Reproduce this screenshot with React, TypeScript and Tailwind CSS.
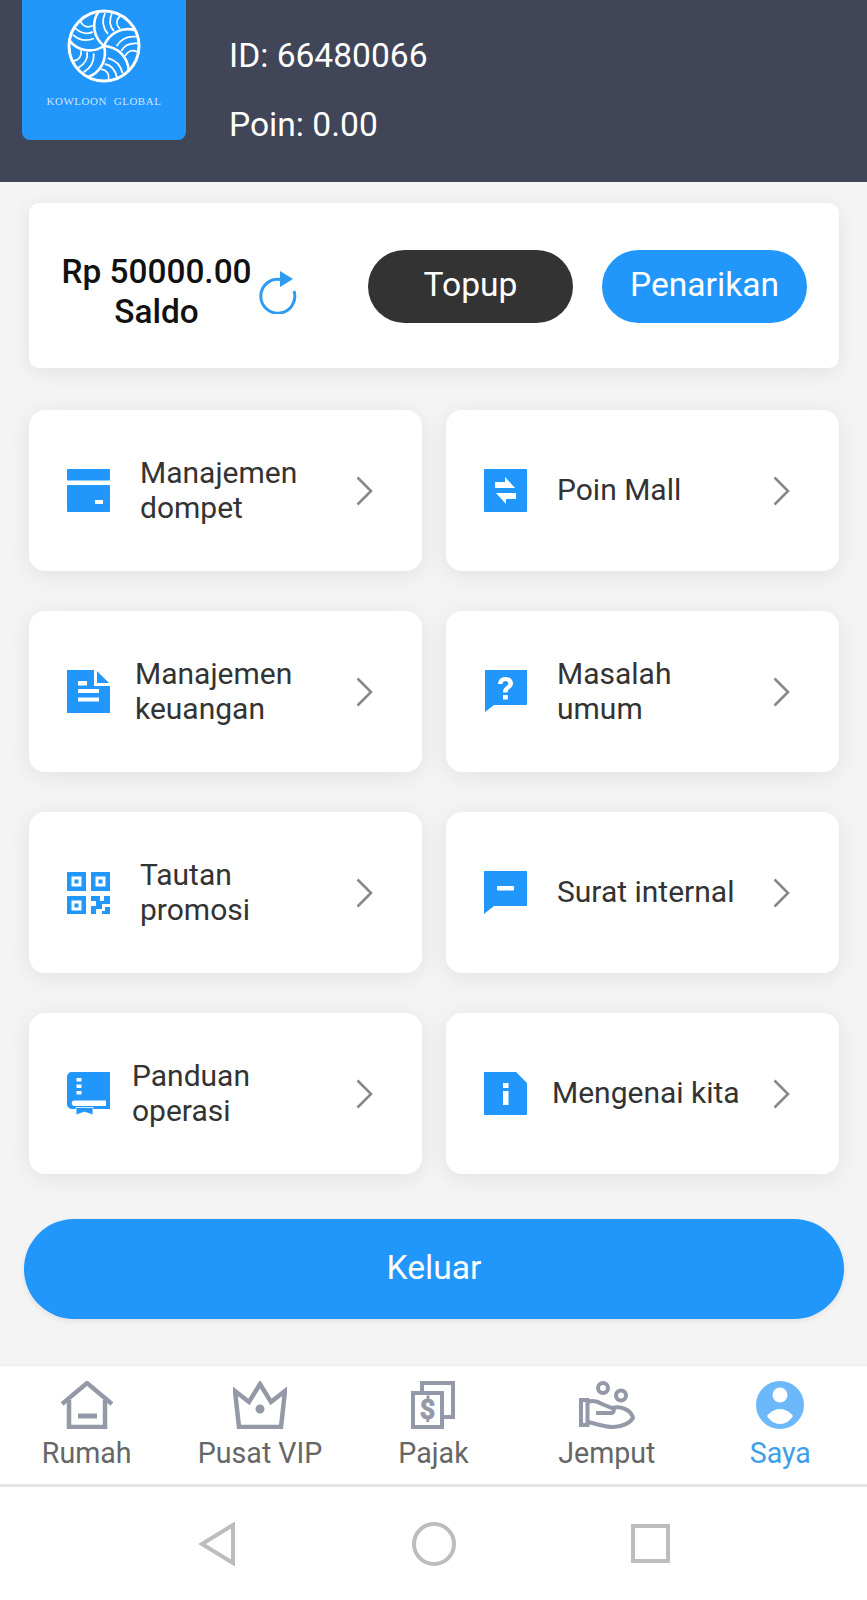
import type { ReactNode } from 'react'

const blue = '#2196fb'

const Chevron = () => (
  <svg viewBox="0 0 20 32" className="w-[20px] h-[32px] shrink-0 ml-auto mr-[47px]" fill="none" stroke="#888" strokeWidth="2.600">
    <path d="M2.500 2.500L16 16 2.500 29.500" />
  </svg>
)

const IconBox = ({ children }: { children: ReactNode }) => (
  <svg viewBox="0 0 43 43" className="w-[43px] h-[43px] shrink-0" fill={blue}>
    {children}
  </svg>
)

const WalletIcon = () => (
  <IconBox>
    <rect x="0" y="0" width="43" height="11.500" rx="1" />
    <rect x="0" y="16" width="43" height="27" rx="1" />
    <rect x="28" y="31" width="8" height="4" fill="#fff" />
  </IconBox>
)

const ExchangeIcon = () => (
  <IconBox>
    <rect x="0" y="0" width="43" height="43" rx="1" />
    <path d="M11 13h10V8l10 11H11zM32 24H12l10 11v-5h10z" fill="#fff" />
  </IconBox>
)

const DocIcon = () => (
  <IconBox>
    <path d="M0 0h27v16h16v27H0z" />
    <path d="M30 1l12 12H30z" />
    <path d="M11 11h9v4.500h-9zM11 19h21v4h-21zM11 27.500h21v4h-21z" fill="#fff" />
  </IconBox>
)

const QuestionIcon = () => (
  <IconBox>
    <path d="M1 0h42v34a1 1 0 0 1-1 1H10L1 42z" />
    <path
      d="M14 14c.3-4.500 3.300-7 7.500-7 4.500 0 7.500 2.700 7.500 6.300 0 2.800-1.500 4.200-3.500 5.700-1.500 1.100-2 1.800-2 3.500h-4.500c0-3 1-4.500 3-6 1.500-1.100 2.300-1.900 2.300-3.100 0-1.300-1.100-2.300-2.800-2.300-1.800 0-2.900 1.100-3 3zM19 25h4.800v4.500H19z"
      fill="#fff"
    />
  </IconBox>
)

const QrIcon = () => (
  <IconBox>
    <path fillRule="evenodd" d="M0 1h19v19H0zM4.500 5.500v10h10v-10zM24 1h19v19H24zM28.500 5.500v10h10v-10zM0 25h19v19H0zM4.500 29.500v10h10v-10z" />
    <rect x="7.500" y="8.500" width="4" height="4" />
    <rect x="31.500" y="8.500" width="4" height="4" />
    <rect x="7.500" y="32.500" width="4" height="4" />
    <path d="M24 25h9v5h4v-5h6v8h-8v5h-6v6h-5v-9h5v-5h-5zM38 36h5v8h-8v-4h3z" />
  </IconBox>
)

const BookIcon = () => (
  <IconBox>
    <path d="M5 0h38v37H6c-3.500 0-6-2-6-5V5c0-3 2-5 5-5z" />
    <path d="M7.500 28.500H39V34H7.500a2.750 2.750 0 0 1 0-5.500z" fill="#fff" />
    <path d="M9 35.500h17V43l-8.500-3L9 43z" stroke="#fff" strokeWidth="0.800" />
    <rect x="9.500" y="6" width="5" height="3.500" fill="#fff" />
    <rect x="9.500" y="12.500" width="5" height="3.500" fill="#fff" />
    <rect x="9.500" y="19" width="5" height="3.500" fill="#fff" />
  </IconBox>
)

const MinusChatIcon = () => (
  <IconBox>
    <path d="M0 0h42a1 1 0 0 1 1 1v33a1 1 0 0 1-1 1H10L0 43z" />
    <rect x="13" y="15" width="17" height="4.500" rx="1" fill="#fff" />
  </IconBox>
)

const InfoIcon = () => (
  <IconBox>
    <path d="M0 0h32l11 11v31a1 1 0 0 1-1 1H0z" />
    <rect x="19" y="11" width="5.500" height="5" fill="#fff" />
    <rect x="19" y="19" width="5.500" height="14" fill="#fff" />
  </IconBox>
)

const menus = [
  { lines: ['Manajemen', 'dompet'], icon: <WalletIcon />, gap: 'ml-[30px]' },
  { lines: ['Poin Mall'], icon: <ExchangeIcon />, gap: 'ml-[30px]' },
  { lines: ['Manajemen', 'keuangan'], icon: <DocIcon />, gap: 'ml-[25px]' },
  { lines: ['Masalah', 'umum'], icon: <QuestionIcon />, gap: 'ml-[30px]' },
  { lines: ['Tautan', 'promosi'], icon: <QrIcon />, gap: 'ml-[30px]' },
  { lines: ['Surat internal'], icon: <MinusChatIcon />, gap: 'ml-[30px]' },
  { lines: ['Panduan', 'operasi'], icon: <BookIcon />, gap: 'ml-[22px]' },
  { lines: ['Mengenai kita'], icon: <InfoIcon />, gap: 'ml-[25px]' },
]

const Logo = () => (
  <svg viewBox="-40 -40 80 80" className="w-[80px] h-[80px]" fill="none" stroke="#fff">
    <circle r="35" strokeWidth="3" />
    {[0, 72, 144, 216, 288].map((deg) => (
      <g key={deg} transform={`rotate(${deg})`} strokeWidth="1.800">
        <path d="M0 0C-11-9-13-24-5-35" strokeWidth="2.600" />
        <path d="M4-12C-2-19-2-26 1-33" />
        <path d="M10-15C5-20 5-26 8-33" />
        <path d="M16-17C12-21 12-26 16-30" />
      </g>
    ))}
  </svg>
)

const tabIcon = '#9499a8'

const HouseIcon = () => (
  <svg viewBox="0 0 52 48" className="w-[52px] h-[48px]" fill="none" stroke={tabIcon} strokeWidth="4.500">
    <path d="M1 23L26 2l25 21" />
    <path d="M8 19v27h36V19" />
    <path d="M17 35h19" strokeWidth="5" />
  </svg>
)

const CrownIcon = () => (
  <svg viewBox="0 0 54 48" className="w-[54px] h-[48px]" fill="none" stroke={tabIcon} strokeWidth="4.500">
    <path d="M2 10l14 11L27 3l11 18 14-11-4 36H6z" />
    <circle cx="27" cy="28" r="4.500" fill={tabIcon} stroke="none" />
  </svg>
)

const TaxIcon = () => (
  <svg viewBox="0 0 44 48" className="w-[44px] h-[48px]" fill="none" stroke={tabIcon} strokeWidth="4">
    <path d="M11 10V2h31v34H32" />
    <rect x="2" y="12" width="29" height="34" />
    <text x="16.500" y="38" fontSize="27" fontWeight="700" fontFamily="Roboto, sans-serif" textAnchor="middle" fill={tabIcon} stroke={tabIcon} strokeWidth="0.800">
      $
    </text>
  </svg>
)

const HandIcon = () => (
  <svg viewBox="0 0 56 48" className="w-[56px] h-[48px]" fill="none" stroke={tabIcon} strokeWidth="4">
    <circle cx="24" cy="7" r="5" />
    <circle cx="42" cy="14.500" r="5" />
    <rect x="2" y="19" width="6.500" height="25" />
    <path d="M9 21c5-2 9-1 14 2l10 4c3 1 2 5-1 5H17" />
    <path d="M33 27c8-2 19 1 21 10-3 5-11 9-20 9-9 0-16-3-25-5" />
  </svg>
)

const UserIcon = () => (
  <svg viewBox="0 0 48 48" className="w-[48px] h-[48px]">
    <circle cx="24" cy="24" r="24" fill="#6cb8fb" />
    <circle cx="24" cy="14" r="7.500" fill="#fff" />
    <path d="M11 35c3-4 8-7 13-7s10 3 13 7c-3 5-8 8-13 8s-10-3-13-8z" fill="#fff" />
  </svg>
)

const tabs = [
  { label: 'Rumah', icon: <HouseIcon /> },
  { label: 'Pusat VIP', icon: <CrownIcon /> },
  { label: 'Pajak', icon: <TaxIcon /> },
  { label: 'Jemput', icon: <HandIcon /> },
  { label: 'Saya', icon: <UserIcon />, active: true },
]

export default function App() {
  return (
    <div className="w-[867px] h-[1600px] flex flex-col bg-[#f4f4f4] font-['Roboto',sans-serif] overflow-hidden">
      <header className="h-[182px] shrink-0 bg-[#414558] flex items-start pl-[22px]">
        <div className="w-[164px] h-[140px] bg-[#2196fb] rounded-b-lg flex flex-col items-center pt-[6px]">
          <Logo />
          <div className="mt-[8px] text-[10.900px] leading-[14px] text-[#cfe8ff] tracking-[0.6px] font-['Liberation_Serif',serif] whitespace-pre">
            KOWLOON  GLOBAL
          </div>
        </div>
        <div className="ml-[43px] pt-[36px] text-white text-[33.600px] leading-[40px] flex flex-col gap-[29px]">
          <div>ID: 66480066</div>
          <div>Poin: 0.00</div>
        </div>
      </header>

      <main className="flex-1 flex flex-col">
        <div className="ml-[29px] mr-[28px] mt-[21px] h-[165px] bg-white rounded-[10px] shadow-[0_4px_20px_rgba(0,0,0,0.08)] flex items-center">
          <div className="ml-[30px] mt-[12px] w-[195px] text-center text-[33.400px] leading-[40px] font-medium text-[#111]">
            Rp 50000.00
            <br />
            Saldo
          </div>
          <svg viewBox="0 0 40 44" className="w-[40px] h-[44px] ml-[3px] mt-[12px]" fill="none" stroke="#2f9bf0" strokeWidth="3">
            <path d="M24 9.500A17 17 0 1 0 37 21" />
            <path d="M23 1l13 8-13 8z" fill="#2f9bf0" stroke="none" />
          </svg>
          <button className="ml-[71px] mt-[2px] pb-[2px] w-[205px] h-[73px] rounded-full bg-[#333] text-white text-[33.600px]">Topup</button>
          <button className="ml-[29px] mt-[2px] pb-[2px] w-[205px] h-[73px] rounded-full bg-[#2196fb] text-white text-[33.600px]">Penarikan</button>
        </div>

        <div className="ml-[29px] mr-[28px] mt-[42px] grid grid-cols-2 gap-x-[24px] gap-y-[40px]">
          {menus.map((item) => (
            <div
              key={item.lines[0] + item.lines.length + item.gap}
              className="h-[161px] bg-white rounded-[16px] shadow-[0_4px_24px_rgba(0,0,0,0.08)] flex items-center pl-[38px]"
            >
              {item.icon}
              <div className={`${item.gap} -mt-[2px] text-[30px] leading-[35px] text-[#333]`}>
                {item.lines.map((line) => (
                  <div key={line} className="whitespace-nowrap">
                    {line}
                  </div>
                ))}
              </div>
              <Chevron />
            </div>
          ))}
        </div>

        <button className="ml-[24px] mr-[23px] mt-[45px] pb-[1px] h-[100px] rounded-full bg-[#2196fb] text-white text-[33.600px] shadow-[0_2px_6px_rgba(0,0,0,0.08)]">
          Keluar
        </button>
      </main>

      <nav className="h-[122px] shrink-0 bg-white border-t border-[#ececec] border-b-[3px] border-b-[#e6e6e6] grid grid-cols-5 pt-[15px]">
        {tabs.map((tab) => (
          <div key={tab.label} className="flex flex-col items-center">
            <div className="h-[48px] flex items-center">{tab.icon}</div>
            <div className={`text-[28.600px] leading-[40px] mt-[4px] ${tab.active ? 'text-[#3d9fe8]' : 'text-[#666]'}`}>{tab.label}</div>
          </div>
        ))}
      </nav>

      <div className="h-[113px] shrink-0 bg-white flex items-center justify-center">
        <div className="w-[217px] flex justify-center">
          <svg viewBox="0 0 38 44" className="w-[38px] h-[44px]" fill="none" stroke="#bdbdbd" strokeWidth="4">
            <path d="M35 3L4 22l31 19z" />
          </svg>
        </div>
        <div className="w-[217px] flex justify-center">
          <div className="w-[44px] h-[44px] rounded-full border-4 border-[#bdbdbd]" />
        </div>
        <div className="w-[217px] flex justify-center">
          <div className="w-[39px] h-[39px] border-4 border-[#bdbdbd]" />
        </div>
      </div>
    </div>
  )
}
